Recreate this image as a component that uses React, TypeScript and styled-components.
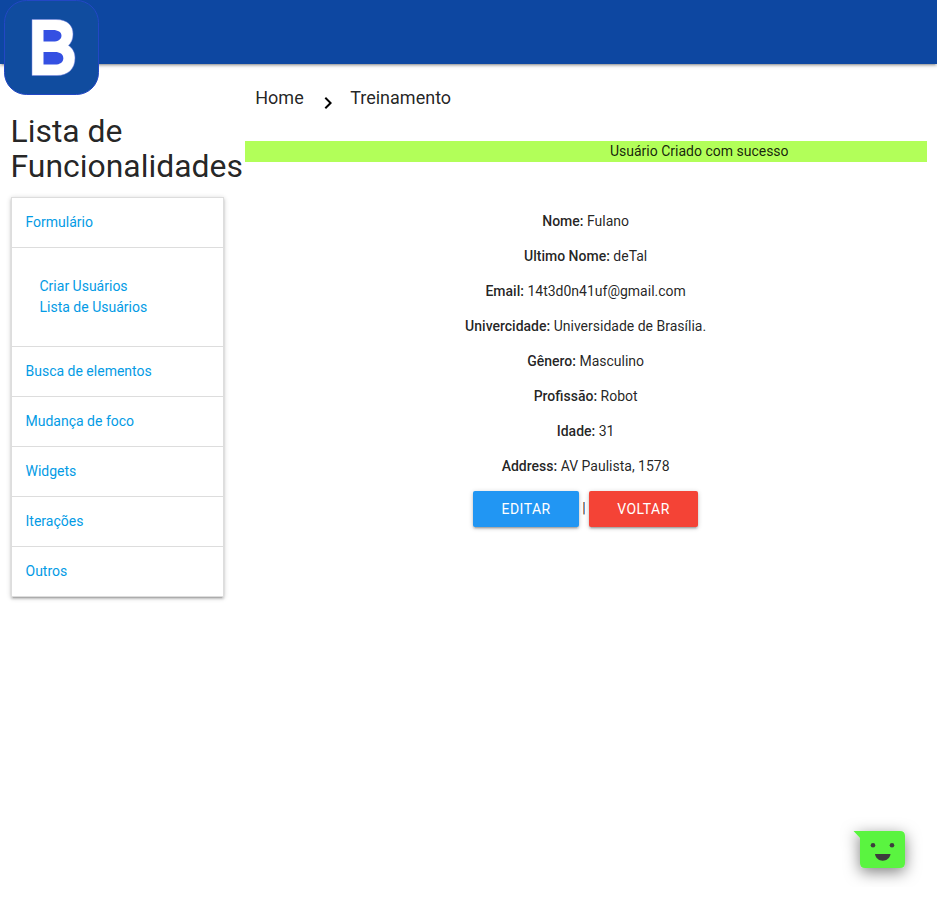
import React from 'react';
import styled, { createGlobalStyle } from 'styled-components';

const GlobalStyle = createGlobalStyle`
  *, *::before, *::after { box-sizing: border-box; }
  html { font-size: 14px; line-height: 1.5; font-family: Roboto, sans-serif; color: rgba(0, 0, 0, 0.87); }
  body { margin: 0; background: #fff; }
`;

const elevation = '0 2px 2px 0 rgba(0,0,0,0.14), 0 3px 1px -2px rgba(0,0,0,0.12), 0 1px 5px 0 rgba(0,0,0,0.2)';

const Nav = styled.nav`
  position: relative;
  height: 64px;
  background: #0d47a1;
  box-shadow: ${elevation};
`;

const Logo = styled.svg`
  position: absolute;
  left: 4px;
  top: 0;
  width: 95px;
  height: 95px;
`;

const Layout = styled.div`
  display: grid;
  grid-template-columns: 234.25px 1fr;
`;

const Sidebar = styled.aside`
  padding: 50px 10.5px 28px;
`;

const Title = styled.h4`
  margin: 0 0 12.77px;
  font-size: 31.92px;
  line-height: 110%;
  font-weight: 400;
`;

const Menu = styled.ul`
  list-style: none;
  margin: 0;
  padding: 0;
  border: 1px solid #ddd;
  border-bottom: 0;
  box-shadow: ${elevation};
`;

const MenuItem = styled.li`
  padding: 14px;
  border-bottom: 1px solid #ddd;
`;

const SubMenu = styled.li`
  display: flex;
  flex-direction: column;
  padding: 28px;
  height: 99px;
  justify-content: center;
  border-bottom: 1px solid #ddd;
`;

const Link = styled.a`
  color: #039be5;
  text-decoration: none;
`;

const Main = styled.main`
  padding: 0 10.5px;
`;

const Breadcrumb = styled.div`
  display: flex;
  align-items: center;
  height: 64px;
  padding: 2px 10.5px 0;
  font-size: 18px;
`;

const Chevron = styled.svg`
  width: 24px;
  height: 24px;
  margin: 11px 10.5px 0 12px;
`;

const Notice = styled.div`
  margin-top: 13px;
  height: 21px;
  padding-left: 227.25px;
  background: #b2ff59;
  text-align: center;
`;

const Details = styled.section`
  margin-top: 49px;
  text-align: center;
`;

const Field = styled.p`
  margin: 0 0 14px;
`;

const Label = styled.strong`
  font-weight: 500;
`;

const Actions = styled.div`
  white-space: nowrap;
`;

const Button = styled.a<{ $color: string }>`
  display: inline-block;
  vertical-align: middle;
  height: 36px;
  padding: 0 28px;
  border-radius: 2px;
  background: ${({ $color }) => $color};
  color: #fff;
  line-height: 36px;
  letter-spacing: 0.5px;
  text-transform: uppercase;
  box-shadow: ${elevation};
`;

const ChatButton = styled.svg`
  position: fixed;
  right: 0;
  bottom: 0;
  width: 97px;
  height: 92px;
`;

const sections = ['Busca de elementos', 'Mudança de foco', 'Widgets', 'Iterações', 'Outros'];

const fields = [
  ['Nome', 'Fulano'],
  ['Ultimo Nome', 'deTal'],
  ['Email', '14t3d0n41uf@gmail.com'],
  ['Univercidade', 'Universidade de Brasília.'],
  ['Gênero', 'Masculino'],
  ['Profissão', 'Robot'],
  ['Idade', '31'],
  ['Address', 'AV Paulista, 1578'],
];

export default function App() {
  return (
    <>
      <GlobalStyle />
      <Nav>
        <Logo viewBox="0 0 95 95">
          <rect x="0.5" y="0.5" width="94" height="94" rx="22" fill="#104c9f" stroke="#2347c5" />
          <path
            d="M28 19.5H52C64 19.5 69 26 69 34C69 39.5 67 43 64.5 45.5C68.5 48 71 52.5 71 58C71 69 64 75.5 53 75.5H28Z"
            fill="#fff"
            stroke="#7985e5"
            strokeWidth="0.5"
          />
          <path d="M39.5 30H49C54 30 57.5 32.2 57.5 35.7S54 41.5 49 41.5H39.5Z" fill="#3450e2" />
          <path d="M39.5 52H51C56 52 59.3 54.2 59.3 58.2S56 64.5 51 64.5H39.5Z" fill="#3450e2" />
        </Logo>
      </Nav>
      <Layout>
        <Sidebar>
          <Title>Lista de Funcionalidades</Title>
          <Menu>
            <MenuItem><Link>Formulário</Link></MenuItem>
            <SubMenu>
              <Link>Criar Usuários</Link>
              <Link>Lista de Usuários</Link>
            </SubMenu>
            {sections.map((name) => (
              <MenuItem key={name}><Link>{name}</Link></MenuItem>
            ))}
          </Menu>
        </Sidebar>
        <Main>
          <Breadcrumb>
            <span>Home</span>
            <Chevron viewBox="0 0 24 24"><path d="M10 6L8.59 7.41 13.17 12l-4.58 4.59L10 18l6-6z" /></Chevron>
            <span>Treinamento</span>
          </Breadcrumb>
          <Notice>Usuário Criado com sucesso</Notice>
          <Details>
            {fields.map(([label, value]) => (
              <Field key={label}><Label>{label}:</Label> {value}</Field>
            ))}
            <Actions>
              <Button $color="#2196f3">Editar</Button>{' | '}
              <Button $color="#f44336">Voltar</Button>
            </Actions>
          </Details>
        </Main>
      </Layout>
      <ChatButton viewBox="0 0 97 92">
        <defs>
          <filter id="bubble-shadow" x="-50%" y="-50%" width="200%" height="200%">
            <feDropShadow dx="0" dy="4" stdDeviation="7.5" floodOpacity="0.5" />
          </filter>
        </defs>
        <path
          d="M13.5 21H60Q65 21 65 26V53Q65 58 60 58H25Q20 58 20 53V28Z"
          fill="#5af441"
          filter="url(#bubble-shadow)"
        />
        <circle cx="33" cy="35.3" r="2.3" fill="#3c3c3c" />
        <circle cx="52" cy="35.3" r="2.3" fill="#3c3c3c" />
        <path d="M35 44H50.5C50 48 46.5 50.7 42.7 50.7S35.500 48 35 44Z" fill="#3c3c3c" />
      </ChatButton>
    </>
  );
}
